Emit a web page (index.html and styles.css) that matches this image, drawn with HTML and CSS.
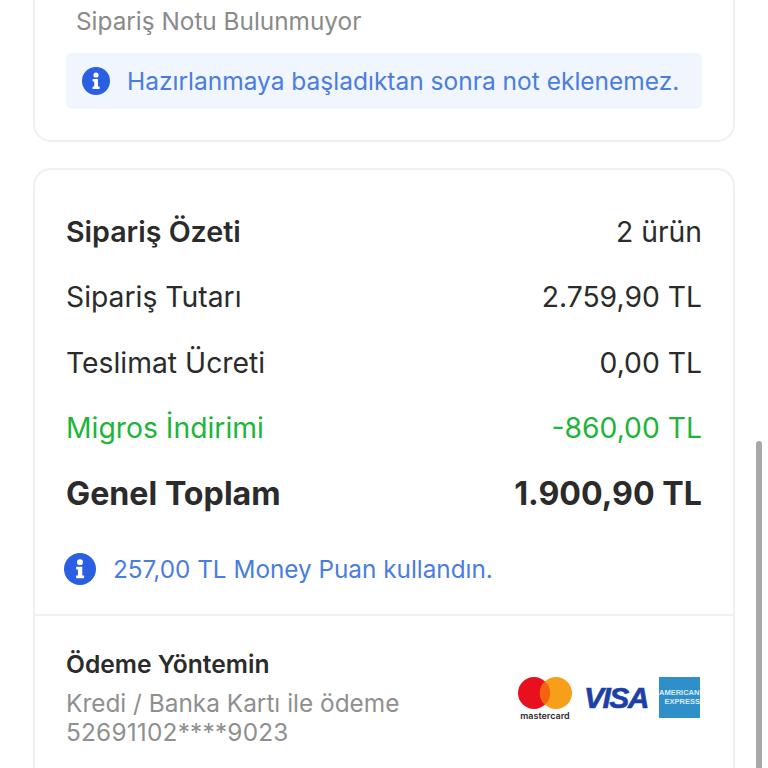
FILE: index.html
```html
<!DOCTYPE html>
<html>
<head>
    <title>Sipariş Detayı</title>
    <meta charset="UTF-8">
    <meta name="viewport" content="width=device-width, initial-scale=1.0">
    <link rel="stylesheet" href="styles.css">
</head>
<body>
  <div class="page">
    <div class="card note-card">
      <p class="note-text">Sipariş Notu Bulunmuyor</p>
      <div class="note-alert">
        <svg class="info-icon" viewBox="0 0 28 28"><circle cx="14" cy="14" r="14" fill="#2b5fe3"/><circle cx="14" cy="8" r="2.6" fill="#fff"/><path d="M10.6 12h5.4v7.6h1.6v2.4h-7v-2.4h1.6v-5.2h-1.6z" fill="#fff"/></svg>
        <span>Hazırlanmaya başladıktan sonra not eklenemez.</span>
      </div>
    </div>

    <div class="card summary-card">
      <div class="summary">
        <div class="row row-head"><span class="row-title">Sipariş Özeti</span><span>2 ürün</span></div>
        <div class="row"><span>Sipariş Tutarı</span><span>2.759,90 TL</span></div>
        <div class="row"><span>Teslimat Ücreti</span><span>0,00 TL</span></div>
        <div class="row row-discount"><span>Migros İndirimi</span><span>-860,00 TL</span></div>
        <div class="row row-total"><span>Genel Toplam</span><span>1.900,90 TL</span></div>
        <div class="points">
          <svg class="info-icon points-icon" viewBox="0 0 28 28"><circle cx="14" cy="14" r="14" fill="#2b5fe3"/><circle cx="14" cy="8" r="2.6" fill="#fff"/><path d="M10.6 12h5.4v7.6h1.6v2.4h-7v-2.4h1.6v-5.2h-1.6z" fill="#fff"/></svg>
          <span>257,00 TL Money Puan kullandın.</span>
        </div>
      </div>

      <div class="payment">
        <div class="payment-info">
          <div class="payment-title">Ödeme Yöntemin</div>
          <div class="payment-desc">Kredi / Banka Kartı ile ödeme<br><span class="card-number">52691102****9023</span></div>
        </div>
        <div class="card-logos">
          <div class="mastercard">
            <svg width="54" height="32" viewBox="0 0 54 32"><circle cx="16" cy="16" r="16" fill="#e8101f"/><circle cx="38" cy="16" r="16" fill="#f79e1b"/><path d="M27 4.2a16 16 0 0 1 0 23.6a16 16 0 0 1 0-23.6z" fill="#f4640f"/></svg>
            <span>mastercard</span>
          </div>
          <div class="visa">VISA</div>
          <div class="amex"><span>AMERICAN</span><span class="amex-second">EXPRESS</span></div>
        </div>
      </div>
    </div>
  </div>
  <div class="scroll-thumb"></div>
</body>
</html>
```

FILE: styles.css
```css
html, body {
    margin: 0;
    height: 100%;
    overflow: hidden;
    background-color: white;
}

body {
    font-family: Inter, "Noto Sans", sans-serif;
    color: #2b2b2b;
}

.page {
    box-sizing: border-box;
    height: 100%;
    padding: 0 33px;
    display: flex;
    flex-direction: column;
    gap: 26px;
}

.card {
    background-color: white;
    border: 2px solid #f0f0f0;
    border-radius: 18px;
}

.note-card {
    border-top: none;
    border-top-left-radius: 0;
    border-top-right-radius: 0;
    padding: 5px 31px 31px;
}

.summary-card {
    flex: 1;
    min-height: 0;
    border-bottom: none;
    border-bottom-left-radius: 0;
    border-bottom-right-radius: 0;
}

.note-text {
    margin: 0 0 15px;
    padding-left: 10px;
    font-size: 24.35px;
    line-height: 33px;
    color: #8a8a8a;
}

.note-alert {
    display: flex;
    align-items: center;
    gap: 17px;
    height: 56px;
    padding-left: 16px;
    background-color: #f1f5fe;
    border-radius: 6px;
    font-size: 24.5px;
    color: #4a7de0;
}

.info-icon {
    width: 28px;
    height: 28px;
    flex: none;
}

.summary {
    padding: 29px 31px 0;
}

.row {
    display: flex;
    justify-content: space-between;
    align-items: center;
    height: 65.5px;
    font-size: 28.3px;
}

.row-title {
    font-size: 28.6px;
    font-weight: 600;
}

.row-discount {
    color: #1db53a;
}

.row-total {
    font-size: 32.2px;
    font-weight: 700;
}

.points {
    display: flex;
    align-items: center;
    gap: 17px;
    margin-top: 12px;
    height: 60px;
    font-size: 24.3px;
    color: #4a7de0;
}

.points-icon {
    width: 32px;
    height: 32px;
    margin-left: -2px;
}

.payment {
    display: flex;
    justify-content: space-between;
    align-items: flex-start;
    margin-top: 15px;
    border-top: 2px solid #f0f0f0;
    padding: 32px 33px 0 31px;
}

.payment-title {
    font-size: 24.6px;
    font-weight: 600;
    line-height: 32px;
    margin-bottom: 9px;
}

.payment-desc {
    font-size: 24.4px;
    line-height: 29px;
    color: #8f8f8f;
}

.card-number {
    letter-spacing: 0.2px;
}

.card-logos {
    display: flex;
    align-items: flex-start;
    margin-top: 29px;
}

.mastercard {
    display: flex;
    flex-direction: column;
    align-items: center;
    width: 54px;
    margin-right: 12px;
}

.mastercard span {
    font-size: 9px;
    font-weight: 600;
    line-height: 12px;
    margin-top: 1px;
}

.visa {
    font-family: "Liberation Sans", sans-serif;
    font-size: 30px;
    font-style: italic;
    font-weight: 700;
    line-height: 42px;
    color: #1c3fa8;
    letter-spacing: -1.5px;
    -webkit-text-stroke: 0.6px #1c3fa8;
    margin-right: 11px;
}

.amex {
    display: flex;
    flex-direction: column;
    justify-content: center;
    width: 41px;
    height: 41px;
    background-color: #2e8fc9;
    font-family: "Liberation Sans", sans-serif;
    font-size: 7.5px;
    font-weight: 700;
    line-height: 9px;
    color: #dcecf6;
}

.amex-second {
    text-align: right;
}

/* overlay scrollbar of the mobile view */
.scroll-thumb {
    position: absolute;
    left: 756px;
    top: 441px;
    bottom: 0;
    width: 6px;
    border-radius: 3px 3px 0 0;
    background-color: #a8a8a8;
}
```
